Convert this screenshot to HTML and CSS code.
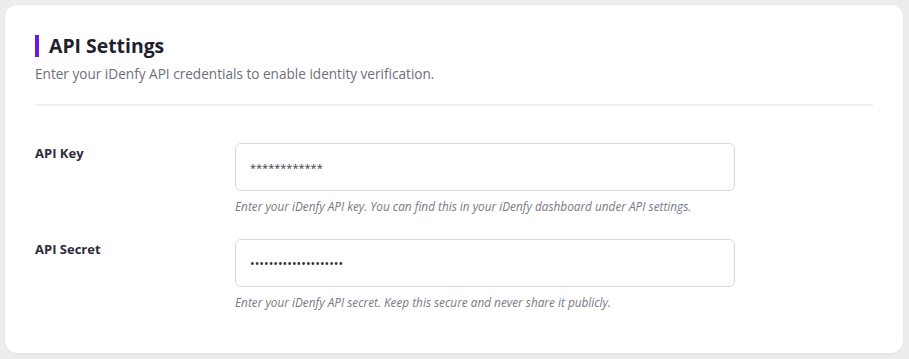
FILE: index.html
```html
<!DOCTYPE html>
<html lang="en">
<head>
<meta charset="UTF-8" />
<meta name="viewport" content="width=device-width, initial-scale=1" />
<title>API Settings</title>
<link rel="stylesheet" href="styles.css">
</head>
<body>
<div class="card">
  <div class="card-head">
    <h2 class="card-title">API Settings</h2>
    <p class="card-desc">Enter your iDenfy API credentials to enable identity verification.</p>
  </div>
  <div class="form-row">
    <label class="form-label" for="api-key">API Key</label>
    <div class="form-field">
      <input id="api-key" class="form-input" type="text" value="************" />
      <p class="form-help">Enter your iDenfy API key. You can find this in your iDenfy dashboard under API settings.</p>
    </div>
  </div>
  <div class="form-row">
    <label class="form-label" for="api-secret">API Secret</label>
    <div class="form-field">
      <input id="api-secret" class="form-input" type="password" value="secretsecretsecretse" />
      <p class="form-help">Enter your iDenfy API secret. Keep this secure and never share it publicly.</p>
    </div>
  </div>
</div>
</body>
</html>
```

FILE: styles.css
```css
html, body { height: 100%; }
body {
  margin: 0; background: #ededee; font-family: "Open Sans", "Noto Sans", sans-serif;
  padding: 5px 6px 6px 5px; box-sizing: border-box;
}
.card {
  background: #fff; border-radius: 12px; padding: 30px 30px 0 30px;
  height: 348px; box-sizing: border-box;
  box-shadow: 0 1px 3px rgba(0,0,0,0.06);
}
.card-head {
  border-bottom: 2px solid #f1f1f3; padding-bottom: 20px; margin-bottom: 37px;
}
.card-title {
  margin: 0; font-size: 19.4px; font-weight: 700; color: #1f1f2e; line-height: 22px;
  border-left: 4px solid #6b19e6; padding-left: 10px; margin-top: 0;
}
.card-desc {
  margin: 7px 0 0 0; font-size: 13.6px; color: #6e6e7a; line-height: 20px;
}
.form-row {
  display: flex; margin-bottom: 25px;
}
.form-label {
  width: 200px; flex-shrink: 0; font-size: 13px; font-weight: 700; color: #2c2c3c;
  line-height: 20px;
}
.form-field { width: 500px; }
.form-input {
  display: block; width: 100%; box-sizing: border-box; height: 48px;
  border: 1px solid #d8d8dc; border-radius: 6px; padding: 0 14px;
  font-family: inherit; font-size: 11px; color: #3a3a48; outline: none;
}
.form-input[type="password"] { font-size: 12.4px; color: #2c2c3c; }
.form-help {
  margin: 7px 0 0 0; font-size: 11.8px; font-style: italic; color: #797985; line-height: 16px;
}
```
